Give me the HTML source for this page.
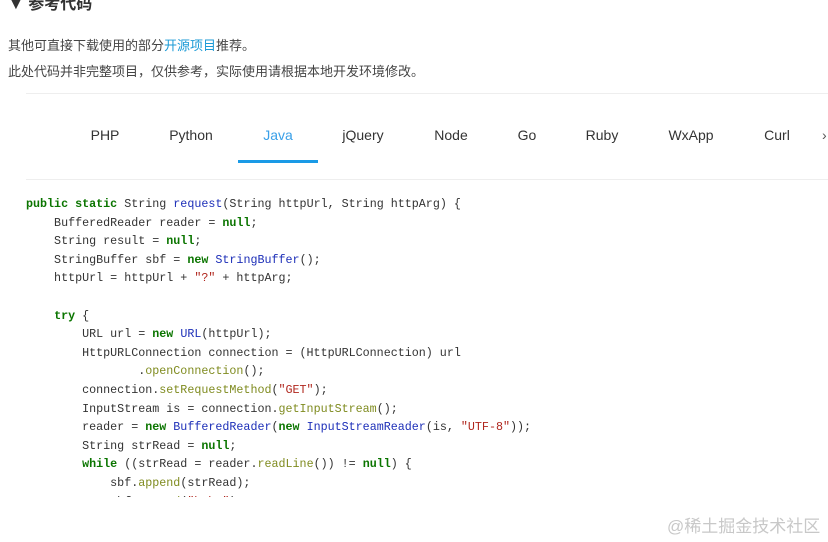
<!DOCTYPE html>
<html><head><meta charset="utf-8"><style>
body{margin:0;width:828px;height:542px;background:#fff;overflow:hidden;position:relative;font-family:"Liberation Sans","Noto Sans CJK SC",sans-serif;}
.a{position:absolute;white-space:nowrap}
.tab{position:absolute;top:127px;font-size:14px;color:#333;transform:translateX(-50%)}
pre{position:absolute;left:26px;top:195px;margin:0;font-family:"Liberation Mono","Noto Sans CJK SC",monospace;font-size:11.7px;line-height:18.6px;color:#333;height:302px;overflow:hidden}
.k{color:#0b7500;font-weight:bold}.f{color:#1d2fb8}.m{color:#7f8b1f}.s{color:#b0261d}
</style></head><body>
<div class="a" style="left:8px;top:-10px;font-size:16px;font-weight:bold;color:#333">▼ 参考代码</div>
<div class="a" style="left:8px;top:35px;font-size:13px;color:#444">其他可直接下载使用的部分<span style="color:#1a9ad6">开源项目</span>推荐。</div>
<div class="a" style="left:8px;top:61px;font-size:13px;color:#444">此处代码并非完整项目，仅供参考，实际使用请根据本地开发环境修改。</div>
<div class="a" style="left:26px;top:93px;width:802px;height:1px;background:#eee"></div>
<div class="a" style="left:26px;top:179px;width:802px;height:1px;background:#eee"></div>
<div class="tab" style="left:105px">PHP</div>
<div class="tab" style="left:191px">Python</div>
<div class="tab" style="left:278px;color:#3aa0e8">Java</div>
<div class="tab" style="left:363px">jQuery</div>
<div class="tab" style="left:451px">Node</div>
<div class="tab" style="left:527px">Go</div>
<div class="tab" style="left:602px">Ruby</div>
<div class="tab" style="left:691px">WxApp</div>
<div class="tab" style="left:777px">Curl</div>
<div class="a" style="left:822px;top:127px;font-size:14px;color:#555">›</div>
<div class="a" style="left:238px;top:160px;width:80px;height:3px;background:#1a9ae6"></div>
<pre><span class="k">public static</span> String <span class="f">request</span>(String httpUrl, String httpArg) {
    BufferedReader reader = <span class="k">null</span>;
    String result = <span class="k">null</span>;
    StringBuffer sbf = <span class="k">new</span> <span class="f">StringBuffer</span>();
    httpUrl = httpUrl + <span class="s">"?"</span> + httpArg;

    <span class="k">try</span> {
        URL url = <span class="k">new</span> <span class="f">URL</span>(httpUrl);
        HttpURLConnection connection = (HttpURLConnection) url
                .<span class="m">openConnection</span>();
        connection.<span class="m">setRequestMethod</span>(<span class="s">"GET"</span>);
        InputStream is = connection.<span class="m">getInputStream</span>();
        reader = <span class="k">new</span> <span class="f">BufferedReader</span>(<span class="k">new</span> <span class="f">InputStreamReader</span>(is, <span class="s">"UTF-8"</span>));
        String strRead = <span class="k">null</span>;
        <span class="k">while</span> ((strRead = reader.<span class="m">readLine</span>()) != <span class="k">null</span>) {
            sbf.<span class="m">append</span>(strRead);
            sbf.<span class="m">append</span>(<span class="s">"\r\n"</span>);</pre>
<div class="a" style="left:667px;top:512px;font-size:17px;color:#c8c8c8">@稀土掘金技术社区</div>
</body></html>
